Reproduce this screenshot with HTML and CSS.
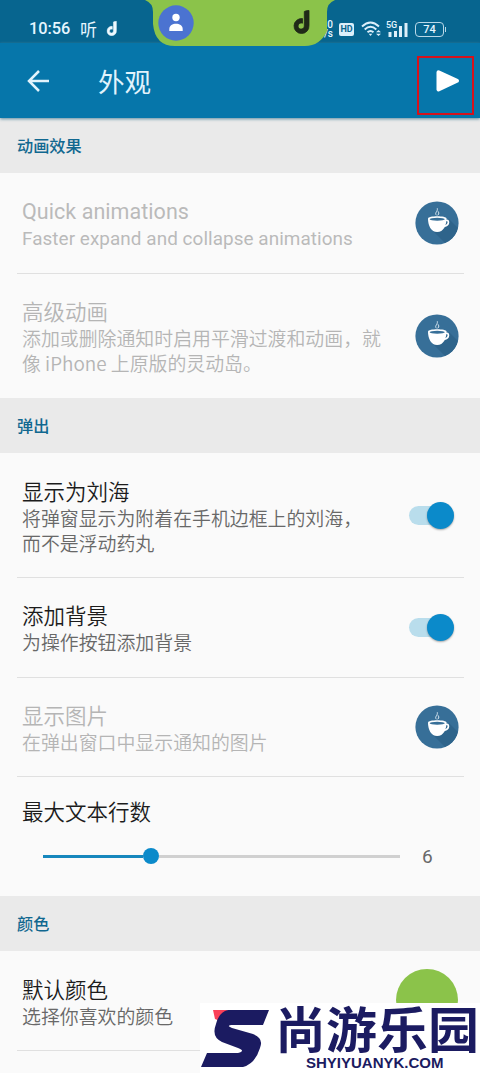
FILE: index.html
```html
<!DOCTYPE html>
<html lang="zh-CN">
<head>
<meta charset="utf-8">
<title>外观</title>
<link rel="stylesheet" href="styles.css">
</head>
<body>
<svg class="defs" width="0" height="0">
  <defs>
    <clipPath id="disc"><circle cx="22" cy="22" r="21.5"/></clipPath>
    <symbol id="coffee" viewBox="0 0 44 44">
      <circle cx="22" cy="22" r="21.6" fill="#376f98"/>
      <path clip-path="url(#disc)" d="M34 18 50 34 38 50 17 29 28 27Z" fill="#2e648b"/>
      <path d="M13 17.500c0-3 18.500-3 18.500 0 0 7-3 13.500-9.300 13.500S13 24.500 13 17.500Z" fill="#fff"/>
      <ellipse cx="22.200" cy="18.200" rx="7.600" ry="1.500" fill="#376f98"/>
      <path d="M30 19.500c4.500-1.500 5 4.500-1 5.800" fill="none" stroke="#fff" stroke-width="1.700"/>
      <path d="M21.500 14.300c-2.500-2.500 1.500-3.500.8-7M22.700 14.300c2-2 .8-3 .3-4" fill="none" stroke="#dbe9f3" stroke-width="1"/>
    </symbol>
    <symbol id="note" viewBox="0 0 18 24">
      <path d="M11.300 11.500V1.500Q13 .5 16 .4V15.500A7.500 7.500 0 1 1 9.500 8.600V13.200A3.100 3.100 0 1 0 11.300 16Z" fill="currentColor" stroke="currentColor" stroke-width=".8"/>
    </symbol>
  </defs>
</svg>
<div class="screen">
  <header class="status">
    <span class="clock">10:56</span>
    <span class="listen">听</span>
    <svg class="status-note" width="12" height="15" viewBox="0 0 18 24"><use href="#note"/></svg>
    <div class="status-right">
      <span class="speed"><b>0</b><b>/s</b></span>
      <span class="hd">HD</span>
      <svg class="wifi" width="21" height="16" viewBox="0 0 21 16" fill="none" stroke="#dceffa" stroke-width="1.900">
        <path d="M1 5.500Q9.500-2.500 18 5.500M3.700 8.500Q9.500 3 15.300 8.500M6.500 11.300Q9.500 8.500 12.500 11.300"/>
        <path d="M7.700 12.700h3.600L9.500 15Z" fill="#dceffa" stroke="none"/>
        <path d="M15 11.300 17.500 9 20 11.300ZM15 12.800 17.500 15 20 12.800Z" fill="#dceffa" stroke="none"/>
      </svg>
      <span class="cell">
        <span class="gen">5G</span>
        <svg width="21" height="15" viewBox="0 0 21 15" fill="#dceffa"><path d="M1.500 10h3v5h-3zM7 9h3v6H7zM12 4h3v11h-3zM17.500 1h3v14h-3z"/></svg>
      </span>
      <span class="battery">74</span>
    </div>
    <div class="island">
      <svg class="island-shape" width="190" height="46" viewBox="0 0 190 46"><path d="M0 0Q8 3 8 12V24Q10 46 30 46H160Q175 46 182 31V12Q182 3 190 0Z" fill="#8bc34a"/></svg>
      <svg class="avatar" width="36" height="36" viewBox="0 0 36 36"><circle cx="18" cy="18" r="17.700" fill="#4b73d1"/><circle cx="18" cy="12.500" r="3.700" fill="#fff"/><path d="M11.300 26v-2c0-7 13.400-7 13.400 0v2Z" fill="#fff"/></svg>
      <svg class="island-note" width="18" height="24"><use href="#note"/></svg>
    </div>
  </header>
  <div class="appbar">
    <svg width="22" height="22" viewBox="0 0 22 22" fill="none" stroke="#e1f3fc" stroke-width="2.500"><path d="M22 11H2M12 1 2 11l10 10"/></svg>
    <h1>外观</h1>
    <span class="play"><svg width="24" height="24" viewBox="0 0 24 24"><path d="M2.500 3.200 21 11.800 2.500 20.500Z" fill="#fff" stroke="#fff" stroke-width="4" stroke-linejoin="round"/></svg></span>
  </div>
  <main>
    <h2>动画效果</h2>
    <section>
      <div class="row off latin">
        <div class="text"><h3>Quick animations</h3><p>Faster expand and collapse animations</p></div>
        <svg class="cup" width="44" height="44"><use href="#coffee"/></svg>
      </div>
      <div class="row off">
        <div class="text"><h3>高级动画</h3><p>添加或删除通知时启用平滑过渡和动画，就<br>像 iPhone 上原版的灵动岛。</p></div>
        <svg class="cup" width="44" height="44"><use href="#coffee"/></svg>
      </div>
    </section>
    <h2>弹出</h2>
    <section>
      <div class="row compact">
        <div class="text"><h3>显示为刘海</h3><p>将弹窗显示为附着在手机边框上的刘海，<br>而不是浮动药丸</p></div>
        <span class="switch"><i></i></span>
      </div>
      <div class="row">
        <div class="text"><h3>添加背景</h3><p>为操作按钮添加背景</p></div>
        <span class="switch"><i></i></span>
      </div>
      <div class="row off compact">
        <div class="text"><h3>显示图片</h3><p>在弹出窗口中显示通知的图片</p></div>
        <svg class="cup" width="44" height="44"><use href="#coffee"/></svg>
      </div>
      <div class="slider-row">
        <h3>最大文本行数</h3>
        <div class="slider"><span class="filled"></span><span class="thumb"></span><span class="rest"></span><span class="value">6</span></div>
      </div>
    </section>
    <h2>颜色</h2>
    <section>
      <div class="row last">
        <div class="text"><h3>默认颜色</h3><p>选择你喜欢的颜色</p></div>
        <span class="swatch"></span>
      </div>
      <div class="rule"></div>
    </section>
  </main>
  <div class="watermark">
    <svg width="70" height="66" viewBox="0 0 70 66">
      <path d="M13 7H28L20 18 15 16Z" fill="#fa4058"/>
      <path d="M28 7H69L63 22H31Q26 23 32 25L53 31Q64 35 60 45Q55 61 43 64H1L7 50H38Q46 48 38 45L22 39Q11 34 16 21Q19 9 28 7Z" fill="#1b1b61"/>
    </svg>
    <div class="brand"><span class="name">尚游乐园</span><span class="site">SHYIYUANYK.COM</span></div>
  </div>
</div>
</body>
</html>
```
FILE: styles.css
```css
* { box-sizing: border-box; }
body { margin: 0; font-family: "Noto Sans CJK SC", sans-serif; background: #fafafa; }
h1, h2, h3, p { margin: 0; font-weight: 400; white-space: nowrap; }
svg { display: block; flex: none; }
.defs { position: absolute; }
.screen { position: relative; width: 480px; height: 1073px; overflow: hidden; }

.status { position: relative; height: 43px; display: flex; align-items: center; padding: 15px 36px 0 29px; background: #07658f; color: #e6f6ff; }
.clock { width: 51px; font: 500 16.300px/20px Roboto, sans-serif; }
.listen { width: 26px; font-size: 17px; line-height: 17px; margin-top: -2px; }
.status-note { color: #eef9ff; margin-top: -2px; }
.status-right { margin-left: auto; display: flex; align-items: center; }
.speed { display: flex; flex-direction: column; align-items: flex-end; margin-right: 6px; font: 500 10px/9px Roboto, sans-serif; }
.speed b { font-weight: 500; }
.hd { width: 15px; height: 13px; margin-right: 7px; border-radius: 2px; background: #dceffa; color: #07658f; font: 700 9px/13px Roboto, sans-serif; text-align: center; }
.wifi { margin-right: 5px; }
.cell { position: relative; margin-right: 7px; }
.gen { position: absolute; left: -1px; top: -1px; font: 500 9px/9px Roboto, sans-serif; }
.battery { position: relative; width: 29px; height: 15px; border: 1.500px solid #b9d8e8; border-radius: 4px; font: 500 11px/13px Roboto, sans-serif; text-align: center; }
.battery::after { content: ""; position: absolute; right: -3px; top: 4px; width: 1px; height: 5px; background: #b9d8e8; }
.island { position: absolute; left: 145px; top: 0; z-index: 2; width: 190px; height: 46px; }
.island-shape, .avatar, .island-note { position: absolute; }
.island-shape { left: 0; top: 0; }
.avatar { left: 12.500px; top: 4.500px; }
.island-note { left: 148px; top: 9.500px; color: #202a18; }

.appbar { position: relative; height: 75px; display: flex; align-items: center; padding: 0 6px 0 27px; background: #0676aa; box-shadow: 0 1px 3px #5d8ca0; }
.appbar h1 { margin-left: 49px; font-size: 26.500px; line-height: 36px; color: #e1f3fc; }
.play { width: 57px; height: 59px; margin: 9px 0 0 auto; padding: 11px 0 0 17px; border: 2px solid #d5121c; }

h2 { height: 55px; padding-left: 17px; background: #eaeaea; color: #116890; font-size: 16.200px; font-weight: 500; line-height: 54px; }
.row { display: flex; align-items: center; justify-content: space-between; padding: 23px 21px 23px 22px; position: relative; }
.row + .row::before, .slider-row::before { content: ""; position: absolute; left: 17px; right: 16px; top: 0; height: 1px; background: #e0e0e0; }
.compact { padding-bottom: 22px; }
.last { height: 99px; padding: 0 22px; }
h3 { font-size: 21.500px; line-height: 29px; color: #1c1c1c; font-weight: 350; }
p { font-size: 18.900px; line-height: 25px; color: #686868; font-weight: 350; }
.off h3, .off p { color: #b5b5b5; }
.latin { font-family: Roboto, sans-serif; }
.latin .text { padding-top: 1px; margin-bottom: -1px; }
.latin h3, .latin p { font-weight: 400; color: #bababa; }
.latin h3 { letter-spacing: .05px; }
.latin p { letter-spacing: .06px; }
.switch { width: 46px; height: 28px; margin-right: 4px; display: flex; align-items: center; }
.switch::before { content: ""; width: 36px; height: 19px; border-radius: 10px; background: #b9ddec; }
.switch i { width: 27px; height: 27px; margin-left: -18px; border-radius: 50%; background: #0b8aca; box-shadow: 0 1px 2px #0005; }
.slider-row { position: relative; height: 120px; padding: 20px 0 0 22px; }
.slider-row + h2 { height: 54px; }
.slider { display: flex; align-items: center; height: 28px; margin: 17px 0 0 21px; }
.filled { width: 100px; height: 3px; background: #1687bd; }
.thumb { width: 16px; height: 16px; border-radius: 50%; background: #0b8aca; }
.rest { width: 241px; height: 3px; background: #d0d0d0; }
.value { margin-left: 22px; padding-top: 2px; font: 400 19px/26px Roboto, sans-serif; color: #686868; }
.swatch { width: 62px; height: 62px; margin-top: -2px; border-radius: 50%; background: #8bc34a; }
.rule { height: 1px; margin: 0 16px 0 17px; background: #e0e0e0; }

.watermark { position: absolute; left: 200px; top: 1003px; width: 280px; height: 70px; display: flex; background: #fff; color: #1b1b61; }
.brand { display: flex; flex-direction: column; margin-left: 5px; }
.name { height: 51px; font-size: 51px; line-height: 51px; font-weight: 700; white-space: nowrap; transform: scaleY(.95); transform-origin: 0 0; }
.site { margin: 1px 0 0 31px; font: 700 15px/16px "Liberation Sans", sans-serif; }
```
